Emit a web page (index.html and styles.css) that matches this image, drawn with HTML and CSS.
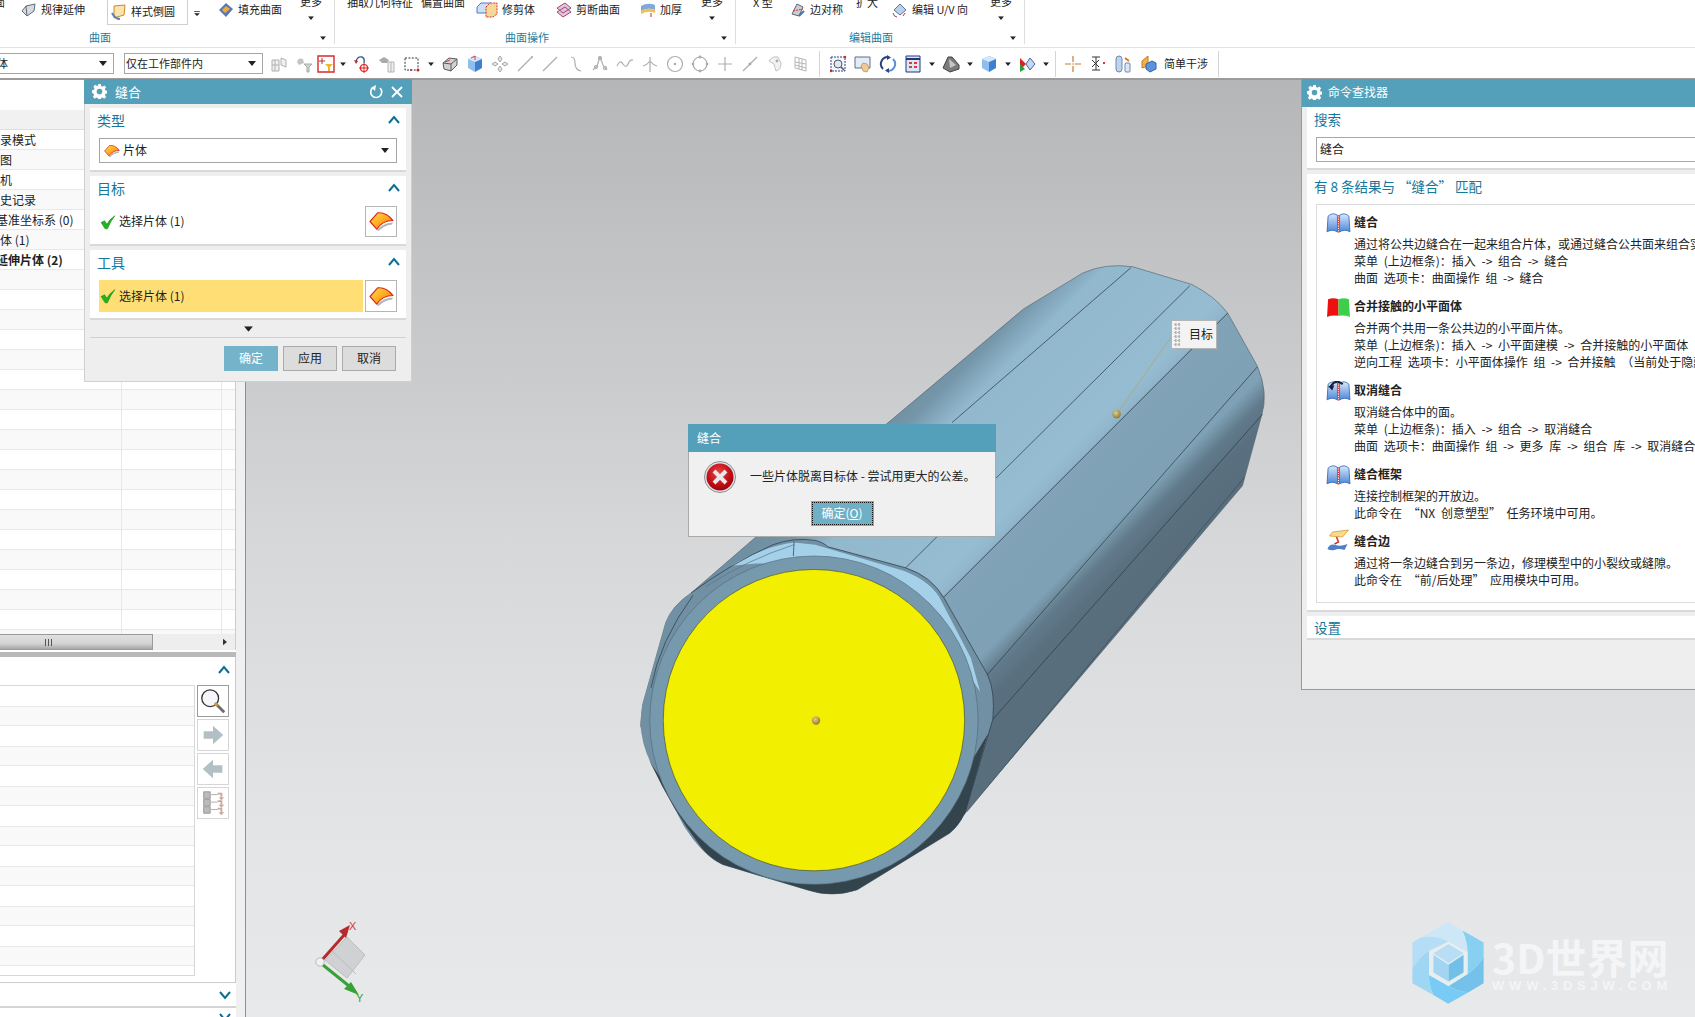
FILE: index.html
```html
<!DOCTYPE html>
<html lang="zh-CN">
<head>
<meta charset="utf-8">
<title>缝合</title>
<link rel="stylesheet" href="styles.css">
</head>
<body>
<svg class="defs" width="0" height="0" aria-hidden="true">
  <defs>
    <linearGradient id="sheetG" x1="0" y1="0" x2="1" y2="1"><stop offset="0" stop-color="#ffe14a"/><stop offset=".55" stop-color="#ffa51e"/><stop offset="1" stop-color="#f07010"/></linearGradient>
    <linearGradient id="blueG" x1="0" y1="0" x2="0" y2="1"><stop offset="0" stop-color="#d6e8fb"/><stop offset="1" stop-color="#4e86d6"/></linearGradient>
    <radialGradient id="redG" cx=".45" cy=".35" r=".75"><stop offset="0" stop-color="#e8444c"/><stop offset=".6" stop-color="#c00d14"/><stop offset="1" stop-color="#8c0006"/></radialGradient>
    <radialGradient id="ballG" cx=".4" cy=".35" r=".7"><stop offset="0" stop-color="#e2cf8c"/><stop offset="1" stop-color="#8a7430"/></radialGradient>
    <linearGradient id="bodyG" gradientUnits="userSpaceOnUse" x1="500" y1="500" x2="1000" y2="1000">
      <stop offset="0" stop-color="#6f8fa2"/><stop offset=".07" stop-color="#7596a9"/><stop offset=".12" stop-color="#83a7bc"/><stop offset=".17" stop-color="#92b8ce"/><stop offset=".52" stop-color="#96bcd2"/><stop offset=".565" stop-color="#90b5cb"/><stop offset=".57" stop-color="#80a3b8"/><stop offset=".8" stop-color="#7fa1b5"/><stop offset=".86" stop-color="#617b8c"/><stop offset=".92" stop-color="#5a7080"/><stop offset="1" stop-color="#586e7d"/>
    </linearGradient>
    <symbol id="gear" viewBox="0 0 16 16"><path fill="#fff" fill-rule="evenodd" d="M6.6 0h2.8l.4 2.2 1.4.6 1.9-1.3 2 2-1.3 1.9.6 1.4 2.1.4v2.8l-2.1.4-.6 1.4 1.3 1.9-2 2-1.9-1.3-1.4.6-.4 2.1H6.6l-.4-2.1-1.4-.6-1.9 1.3-2-2 1.3-1.9-.6-1.4L0 9.4V6.6l2.1-.4.6-1.4-1.3-1.9 2-2 1.9 1.3 1.4-.6zM8 5a3 3 0 1 0 0 6 3 3 0 0 0 0-6z"/></symbol>
    <symbol id="sheet" viewBox="0 0 26 24"><path d="M8 21 Q15 13 25 13 L24 15 Q15 16 10 22z" fill="#b5b5b5"/><path d="M1 12 L9 3 Q18 2 25 11 Q14 11 8 20z" fill="url(#sheetG)" stroke="#d9281c" stroke-width="1.2" stroke-linejoin="round"/></symbol>
    <symbol id="check" viewBox="0 0 14 14"><path d="M1 7.5 L4 6 L6 9 Q8.5 4.5 13 1.5 Q9 6.5 6.5 13 L4.5 13z" fill="#1eb51e" stroke="#0d8a0d" stroke-width=".5"/></symbol>
    <symbol id="chev" viewBox="0 0 12 10"><path d="M1 8 L6 2 L11 8" fill="none" stroke="#0b6f94" stroke-width="2"/></symbol>
    <symbol id="book" viewBox="0 0 24 20"><path d="M1 18 L2 3 Q6 -1 11 2 L11 18 Q6 15 1 18z M23 18 L22 3 Q18 -1 13 2 L13 18 Q18 15 23 18z" fill="url(#blueG)" stroke="#2f68b8" stroke-width=".8"/><path d="M12 2 V19" stroke="#e23b3b" stroke-width="2" stroke-dasharray="1.2 1"/></symbol>
    <symbol id="down" viewBox="0 0 8 5"><path d="M0 0 H8 L4 5z" fill="#222"/></symbol>
    <symbol id="cube" viewBox="0 0 18 18"><path d="M9 1 L16 4 V13 L9 17z" fill="#3f7fd0"/><path d="M9 1 L2 4 V13 L9 17z" fill="#8fbdf0"/><path d="M2 4 L9 1 L16 4 L9 7z" fill="#d5e8fb"/></symbol>
  </defs>
</svg>

<header class="ribbon">
  <section class="rgroup g1">
    <div class="ritems">
      <span class="ri up w21">面</span>
      <span class="ri w86"><svg class="ico16" viewBox="0 0 16 16"><path d="M1 9 L5 4 L14 2 L13 9 L6 14z" fill="#d6dbe2" stroke="#5f6b78"/><path d="M5 4 L6 14" stroke="#5f6b78"/></svg>规律延伸</span>
      <span class="ri boxed w81"><svg class="ico16" viewBox="0 0 16 16"><path d="M3 2 L14 1 L13 11 L3 14z" fill="#fbe3b0" stroke="#c98a2d"/><path d="M1 9 Q4 15 9 15" fill="none" stroke="#4f86c6" stroke-width="2"/></svg>样式倒圆</span>
      <span class="ri ddmark"><svg class="ico8" viewBox="0 0 8 7"><path d="M0 0 H8 V1 H0z M0 3 H8 L4 7z" fill="#222"/></svg></span>
      <span class="ri w82"><svg class="ico16" viewBox="0 0 16 16"><path d="M1 8 L8 1 L15 7 L8 15z" fill="#5a79b4"/><path d="M4 8 L8 4 L12 7 L7 11z" fill="#f2a93b"/></svg>填充曲面</span>
      <span class="more w34"><span class="moretxt">更多</span><svg class="ico6" viewBox="0 0 8 5"><use href="#down"/></svg></span>
    </div>
    <div class="rlabel"><span>曲面</span><svg class="ico6 endarrow" viewBox="0 0 8 5"><use href="#down"/></svg></div>
  </section>
  <section class="rgroup g2">
    <div class="ritems">
      <span class="ri up w74">抽取几何特征</span>
      <span class="ri up w55">偏置曲面</span>
      <span class="ri w81b"><svg class="ico22" viewBox="0 0 22 16"><path d="M1 5 L5 1 H15 V11 H1z" fill="#cfe0f6" stroke="#4d7fc0"/><path d="M10 5 L14 1 H21 V12 L17 15 H10z" fill="#f6d79a" stroke="#d0342c" stroke-dasharray="2 1"/></svg>修剪体</span>
      <span class="ri w84"><svg class="ico16" viewBox="0 0 16 16"><path d="M1 6 L9 1 L15 6 L7 11z M1 10 L9 5 L15 10 L7 15z" fill="#d7c8ea" stroke="#b2445e"/></svg>剪断曲面</span>
      <span class="ri w61"><svg class="ico16" viewBox="0 0 16 16"><path d="M1 4 Q8 0 15 3 V8 Q8 5 1 9z" fill="#7fa8dc"/><path d="M1 9 Q8 5 15 8 V11 Q8 8 1 12z" fill="#f4c04d"/><path d="M11 11 V15" stroke="#c2332a"/></svg>加厚</span>
      <span class="more w34"><span class="moretxt">更多</span><svg class="ico6" viewBox="0 0 8 5"><use href="#down"/></svg></span>
    </div>
    <div class="rlabel"><span>曲面操作</span><svg class="ico6 endarrow" viewBox="0 0 8 5"><use href="#down"/></svg></div>
  </section>
  <section class="rgroup g3">
    <div class="ritems">
      <span class="ri up w37">X 型</span>
      <span class="ri w66"><svg class="ico16" viewBox="0 0 16 16"><path d="M2 12 L7 2 L13 5 L9 14z" fill="#c9cdd4" stroke="#5d6672"/><path d="M3 9 L13 7" stroke="#d33" stroke-dasharray="2 1"/><path d="M9 14 L14 9" stroke="#3a76c4" stroke-width="2"/></svg>边对称</span>
      <span class="ri up w36">扩大</span>
      <span class="ri w98"><svg class="ico16" viewBox="0 0 16 16"><path d="M2 8 L8 2 L14 8 L8 13z" fill="#bcd0ea" stroke="#5876a3"/><path d="M1 11 Q2 15 5 15 M11 14 L13 11" stroke="#c93030" fill="none"/></svg>编辑 U/V 向</span>
      <span class="more w34"><span class="moretxt">更多</span><svg class="ico6" viewBox="0 0 8 5"><use href="#down"/></svg></span>
    </div>
    <div class="rlabel"><span>编辑曲面</span><svg class="ico6 endarrow" viewBox="0 0 8 5"><use href="#down"/></svg></div>
  </section>
</header>

<nav class="toolbar">
  <div class="tselect ts1"><span>体</span><svg class="ico8" viewBox="0 0 8 5"><use href="#down"/></svg></div>
  <div class="tselect ts2"><span>仅在工作部件内</span><svg class="ico8" viewBox="0 0 8 5"><use href="#down"/></svg></div>
  <div class="tools">
    <span class="t"><svg viewBox="0 0 18 18"><path d="M2 5 H9 V16 H2z M11 3 L16 5 V12 L11 10z" fill="#f0f0f0" stroke="#b0b0b0"/><path d="M2 10 H9 M5 5 V16" stroke="#b0b0b0"/></svg></span>
    <span class="t"><svg viewBox="0 0 18 18"><path d="M2 7 Q3 2 8 4 L9 8 L4 10z" fill="#c4c4c4"/><path d="M9 9 H17 L14 12 V17 H12 V12z" fill="#d4d4d4" stroke="#a8a8a8"/></svg></span>
    <span class="t tn"><svg class="redbox" viewBox="0 0 18 18"><path d="M1 1 H17 V17 H1z" fill="#fff" stroke="#d52a2a" stroke-width="1.4"/><path d="M5 3 V9 M2 6 H8" stroke="#b43030"/><path d="M8 9 H16 L13 12 V16 H11 V12z" fill="#f0b62c"/></svg></span>
    <span class="ta"><svg viewBox="0 0 8 5"><use href="#down"/></svg></span>
    <span class="t"><svg viewBox="0 0 18 18"><path d="M3 7 Q4 1 9 2 Q12 3 11 8" fill="none" stroke="#3d5c8a" stroke-width="1.4"/><path d="M1 5 L5 6 L3 9z" fill="#c22"/><circle cx="11" cy="13" r="3.5" fill="none" stroke="#d22" stroke-width="1.2"/><path d="M11 8 V18 M6 13 H16" stroke="#d22"/></svg></span>
    <span class="t"><svg viewBox="0 0 18 18"><path d="M1 5 L6 2 L11 5 L9 8 L4 8z" fill="#aaa"/><path d="M10 7 H16 V17 H10z M13 7 V17" fill="#eee" stroke="#b5b5b5"/></svg></span>
    <span class="t"><svg viewBox="0 0 18 18"><path d="M2 3 H15 V15 H2z" fill="none" stroke="#333" stroke-dasharray="2 1.4"/><circle cx="15" cy="15" r="1.5" fill="#c22"/><circle cx="8" cy="15" r="1" fill="#c22"/></svg></span>
    <span class="ta"><svg viewBox="0 0 8 5"><use href="#down"/></svg></span>
    <span class="t"><svg viewBox="0 0 18 18"><path d="M2 8 L8 3 L16 4 V10 L10 16 L3 14z" fill="#d2d2d4" stroke="#5b5b5b"/><path d="M10 16 V9 L16 4 M10 9 L2 8" stroke="#5b5b5b" fill="none"/><path d="M4 7 L9 5" stroke="#d33"/></svg></span>
    <span class="t"><svg viewBox="0 0 18 18"><use href="#cube"/><path d="M5 3 L9 1 M9 1 V5" stroke="#d33"/></svg></span>
    <span class="t"><svg viewBox="0 0 18 18"><path d="M9 1 L11 4 L9 7 L7 4z M1 9 L4 7 L7 9 L4 11z M17 9 L14 7 L11 9 L14 11z M9 17 L11 14 L9 11 L7 14z" fill="#e8e8e8" stroke="#a5a5a5"/></svg></span>
    <span class="t"><svg viewBox="0 0 18 18"><path d="M2 16 L16 2" class="gs"/><circle cx="16" cy="2" r="1" fill="#aaa"/></svg></span>
    <span class="t"><svg viewBox="0 0 18 18"><path d="M2 16 L16 2" class="gs"/></svg></span>
    <span class="t"><svg viewBox="0 0 18 18"><path d="M5 2 Q9 2 9 8 Q9 15 15 16" class="gs"/></svg></span>
    <span class="t"><svg viewBox="0 0 18 18"><path d="M2 15 L6 11 L9 2 L12 10 L16 15" class="gs"/><circle cx="9" cy="3" r="1.5" class="gs"/><circle cx="5" cy="12" r="1.5" class="gs"/><circle cx="14" cy="13" r="1.5" class="gs"/></svg></span>
    <span class="t"><svg viewBox="0 0 18 18"><path d="M1 11 Q4 4 7 9 T12 9 T17 5" class="gs"/></svg></span>
    <span class="t"><svg viewBox="0 0 18 18"><path d="M9 2 V17 M9 6 Q6 10 2 11 M9 6 Q12 10 16 11" class="gs"/></svg></span>
    <span class="t"><svg viewBox="0 0 18 18"><circle cx="9" cy="9" r="7.5" class="gs"/><circle cx="9" cy="9" r="1.2" fill="#aaa"/></svg></span>
    <span class="t"><svg viewBox="0 0 18 18"><circle cx="9" cy="9" r="7" class="gs"/><circle cx="9" cy="2" r="1.4" fill="#aaa"/><circle cx="9" cy="16" r="1.4" fill="#aaa"/><circle cx="2" cy="9" r="1.4" fill="#aaa"/><circle cx="16" cy="9" r="1.4" fill="#aaa"/></svg></span>
    <span class="t"><svg viewBox="0 0 18 18"><path d="M9 2 V16 M2 9 H16" class="gs"/></svg></span>
    <span class="t"><svg viewBox="0 0 18 18"><path d="M2 16 L16 2" class="gs"/><circle cx="9" cy="9" r="1.4" fill="#aaa"/></svg></span>
    <span class="t"><svg viewBox="0 0 18 18"><path d="M3 6 Q6 1 12 2 L15 8 Q15 15 10 16 L8 9z" fill="#f2f2f2" stroke="#c2c2c2"/><circle cx="11" cy="6" r="1.4" fill="#aaa"/></svg></span>
    <span class="t"><svg viewBox="0 0 18 18"><path d="M4 2 L15 5 V16 L4 13z M4 7 L15 9 M4 10 L15 13 M8 3 V14 M11 4 V15" fill="none" stroke="#b5b5b5"/></svg></span>
    <i class="tsep"></i>
    <span class="t"><svg viewBox="0 0 18 18"><path d="M2 2 H16 V16 H2z" fill="#f4f6fa" stroke="#2a3f98" stroke-dasharray="2 1"/><circle cx="9" cy="9" r="4" fill="#dde8f4" stroke="#556"/><path d="M12 12 L15 15" stroke="#556" stroke-width="1.6"/><circle cx="2" cy="16" r="1.2" fill="#d22"/><circle cx="16" cy="2" r="1.2" fill="#d22"/></svg></span>
    <span class="t"><svg viewBox="0 0 18 18"><path d="M1 2 H16 V13 H1z" fill="#e3ebf5" stroke="#5a6f8e"/><path d="M9 8 L13 9 L15 13 L13 17 L9 16 L7 11z" fill="#f1c998" stroke="#a77a42" stroke-width=".6"/></svg></span>
    <span class="t"><svg viewBox="0 0 18 18"><path d="M4 14 A7 7 0 0 1 9 2" fill="none" stroke="#29417d" stroke-width="2"/><path d="M14 4 A7 7 0 0 1 9 16" fill="none" stroke="#5b8fd8" stroke-width="2"/><path d="M8 0 L12 2.5 L8 5z M10 13 L6 15.500 L10 18z" fill="#29417d"/></svg></span>
    <span class="t"><svg viewBox="0 0 18 18"><path d="M2 1 H16 V17 H2z" fill="#dce6f5" stroke="#22357f"/><path d="M2 4 H16" stroke="#22357f" stroke-width="2"/><path d="M5 7 H8 V9 H5z M10 7 H13 V9 H10z M5 11 H8 V13 H5z M10 11 H13 V13 H10z" fill="#e03a2e"/></svg></span>
    <span class="ta"><svg viewBox="0 0 8 5"><use href="#down"/></svg></span>
    <span class="t"><svg viewBox="0 0 18 18"><path d="M1 13 L6 2 H10 L17 10 V14 L8 17z" fill="#7b7b7b" stroke="#444"/><path d="M7 4 L14 10 L8 13z" fill="#c6c6c6"/></svg></span>
    <span class="ta"><svg viewBox="0 0 8 5"><use href="#down"/></svg></span>
    <span class="t"><svg viewBox="0 0 18 18"><use href="#cube"/></svg></span>
    <span class="ta"><svg viewBox="0 0 8 5"><use href="#down"/></svg></span>
    <span class="t"><svg viewBox="0 0 18 18"><path d="M2 3 L8 9 L2 15z" fill="#d22"/><path d="M2 9 L7 14 L2 17z" fill="#2a9e3a"/><path d="M12 3 L17 9 L12 15 L8 9z" fill="#c8d7f0" stroke="#4163a8"/></svg></span>
    <span class="ta"><svg viewBox="0 0 8 5"><use href="#down"/></svg></span>
    <i class="tsep tsep2"></i>
    <span class="t"><svg viewBox="0 0 18 18"><path d="M9 1 V7 M9 11 V17 M1 9 H7 M11 9 H17" stroke="#c77a36" stroke-width="1.2"/><circle cx="9" cy="9" r=".8" fill="#c77a36"/></svg></span>
    <span class="t"><svg viewBox="0 0 18 18"><path d="M3 2 H11 M3 15 H11 M7 2 V15" stroke="#333"/><path d="M3 5 L10 12 M10 5 L3 12" stroke="#333"/><path d="M14 7 L16 9 M16 7 L14 9" stroke="#d33"/></svg></span>
    <span class="t"><svg viewBox="0 0 18 18"><rect x="2" y="1" width="6" height="16" rx="3" fill="#bcd4ee" stroke="#6e8aa8"/><rect x="11" y="8" width="5" height="9" rx="1" fill="#dbe7f5" stroke="#6e8aa8"/><path d="M11 3 L15 6" stroke="#d07b2c" stroke-width="2"/></svg></span>
    <span class="t"><svg viewBox="0 0 18 18"><path d="M9 1 L3 6 V13 L9 11z" fill="#f1b04e" stroke="#c47a20"/><path d="M7 9 L13 6 L17 8 V14 L11 17 L7 14z" fill="#5c93dc" stroke="#3164a8"/></svg></span>
    <span class="ttext">简单干涉</span>
    <i class="tsep tsep3"></i>
  </div>
</nav>

<main class="workspace">
  <aside class="nav">
    <div class="nav-spacer"></div>
    <div class="nav-head"></div>
    <div class="nav-table">
      <div class="nr">录模式</div>
      <div class="nr">图</div>
      <div class="nr">机</div>
      <div class="nr">史记录</div>
      <div class="nr nclip">基准坐标系 (0)</div>
      <div class="nr">体 (1)</div>
      <div class="nr nb nclip">延伸片体 (2)</div>
    </div>
    <div class="hscroll">
      <div class="thumb"><i></i><i></i><i></i></div>
      <svg class="sarrow" viewBox="0 0 5 8"><path d="M0 0 L5 4 L0 8z" fill="#333"/></svg>
    </div>
    <div class="splitter"></div>
    <section class="nav-sec">
      <div class="nav-sec-head"><svg class="chev" viewBox="0 0 12 10"><use href="#chev"/></svg></div>
      <div class="nav-sec-body">
        <div class="list"></div>
        <div class="side">
          <span class="sbtn sbtn-on"><svg viewBox="0 0 30 30"><circle cx="12" cy="12" r="9" fill="#f4f6fa" stroke="#333" stroke-width="1.4"/><path d="M18 18 L27 27" stroke="#6c6c6c" stroke-width="3"/><path d="M17 17 L20 20" stroke="#d59630" stroke-width="3"/></svg></span>
          <span class="sbtn"><svg viewBox="0 0 30 30"><path d="M5 11 H15 V5 L26 15 L15 25 V19 H5z" fill="#b2c0c6"/></svg></span>
          <span class="sbtn"><svg viewBox="0 0 30 30"><path d="M25 11 H15 V5 L4 15 L15 25 V19 H25z" fill="#b2c0c6"/></svg></span>
          <span class="sbtn"><svg viewBox="0 0 30 30"><path d="M5 3 H12 V10 H5z M5 11 H12 V18 H5z M5 19 H12 V26 H5z" fill="#bbb" stroke="#999"/><path d="M13 6 H20 M13 14 H20 M13 22 H20" stroke="#aaa"/><path d="M20 4 H25 V9 L27 9 L24 12 L21 9 H23 V6 H20z M20 12 H25 V17 L27 17 L24 20 L21 17 H23 V14 H20z M20 20 H25 V25 L27 25 L24 28 L21 25 H23 V22 H20z" fill="#c9a9a0"/></svg></span>
        </div>
      </div>
    </section>
    <div class="nav-fold"><svg class="chev flip" viewBox="0 0 12 10"><use href="#chev"/></svg></div>
    <div class="nav-fold2"><svg class="chev flip" viewBox="0 0 12 10"><use href="#chev"/></svg></div>
  </aside>
  <div class="strip"></div>
  <div class="viewport"></div>
</main>

<svg class="scene" viewBox="0 0 1568 1568">
  <path d="M25 1130 L30 1080 L85 885 Q100 845 145 815 L610 413 L935 140 L1075 55 Q1130 30 1195 40 L1335 82 Q1390 110 1420 150 L1490 275 Q1518 340 1500 395 L1455 560 L790 1345 L760 1385 L540 1520 Q480 1540 420 1520 L220 1460 Q175 1440 130 1370 L50 1220z" fill="url(#bodyG)" stroke="#50626f" stroke-width="1.5"/>
  <path d="M145 815 Q240 745 340 700 Q390 682 440 690 Q460 695 470 705 L655 755 Q715 775 745 825 L850 1010 Q868 1050 862 1115 L795 1340 Q780 1370 760 1385 L540 1520 Q480 1540 420 1520 L220 1460 Q175 1440 130 1370 L50 1220 Q15 1150 30 1080 L85 885 Q100 845 145 815z" fill="#7190a3"/>
  <path d="M50 1220 Q100 1330 170 1420 Q190 1445 220 1460 L420 1520 Q480 1540 540 1520 L760 1385 Q780 1370 795 1340 L850 1150 L700 1400 L430 1500 L150 1370z" fill="#33444d"/>
  <path d="M240 750 Q330 700 390 695 L440 700 L650 762 Q710 785 735 825 L810 970 L832 1050 L700 850 L500 740 L300 745z" fill="#a5d0ea"/>
  <circle cx="437" cy="1117" r="390" fill="#7799ad" stroke="#51697a" stroke-width="1.500"/>
  <circle cx="437" cy="1117" r="358" fill="#f2f000" stroke="#3f4a2a" stroke-width="1.500"/>
  <g fill="none" stroke="#2c3a44" stroke-width="1.7">
    <path d="M765 410 L1190 42"/>
    <path d="M655 755 L1330 85"/>
    <path d="M745 825 L1420 150"/>
    <path d="M848 1010 L1490 278"/>
    <path d="M862 1115 L1503 390"/>
    <path d="M800 1335 L1460 540" stroke="#3d4f5b"/>
    <path d="M145 815 Q240 745 340 700 Q390 682 440 690 Q460 695 470 705 L655 755 Q715 775 745 825 L850 1010 Q868 1050 862 1115 L795 1340"/>
    <path d="M390 692 L388 727 M150 820 Q70 930 50 1040"/>
    <path d="M180 800 Q280 735 390 700" stroke="#5a7486"/>
  </g>
  <path d="M1285 208 L1156 390" stroke="#b3a25a" stroke-width="1.6"/>
  <circle cx="1156" cy="390" r="10" fill="url(#ballG)"/>
  <circle cx="442" cy="1118" r="10" fill="url(#ballG)"/>
</svg>

<div class="tag"><i class="grip"></i><span>目标</span></div>

<svg class="triad" viewBox="0 0 70 90">
  <path d="M38 15 L56 33 L38 56 L16 38z" fill="#d0d1d3" stroke="#bcbdbf"/>
  <path d="M21 27 L47 52" stroke="#bcbdbf"/>
  <path d="M13 38 L36 12" stroke="#b52b2b" stroke-width="3"/><path d="M41 3 L30 9 L37 16z" fill="#b52b2b"/>
  <path d="M14 43 L40 64" stroke="#37a037" stroke-width="3"/><path d="M50 73 L42 60 L35 67z" fill="#37a037"/>
  <circle cx="11" cy="40" r="4.200" fill="#f1f1f1" stroke="#999" stroke-width=".6"/>
  <text x="40" y="8" class="tx">X</text>
  <text x="47" y="80" class="ty">Y</text>
</svg>

<svg class="logo" viewBox="60 40 290 290">
  <path d="M204 67 L247 92 Q265 130 262 175 L205 125 Q165 105 122 113z" fill="#cde7f6"/>
  <path d="M247 92 L310 128 V172 Q290 205 262 222 L262 175 Q265 130 247 92z" fill="#88d0f2"/>
  <path d="M310 172 V250 L265 277 Q235 275 205 258 L262 222 Q290 205 310 172z" fill="#74c1ea"/>
  <path d="M265 277 L204 311 L160 285 Q145 255 147 225 L205 258 Q235 275 265 277z" fill="#78cbf4"/>
  <path d="M160 285 L97 250 V205 Q120 170 147 152 L147 225 Q145 255 160 285z" fill="#9ed6f3"/>
  <path d="M97 205 V128 L122 113 Q165 105 205 125 L147 152 Q120 170 97 205z" fill="#b5def6"/>
  <path d="M205 125 L262 158 V222 L205 258 L147 225 V158z" fill="#e8edf0"/>
  <path d="M205 133 L250 160 L205 190 L160 160z" fill="#b8def5"/>
  <path d="M160 165 L205 195 V245 L160 218z" fill="#a3d5f2"/>
  <path d="M205 195 L250 165 V218 L205 245z" fill="#72c0e8"/>
</svg>
<div class="brand">
  <div class="brand-name">3D世界网</div>
  <div class="brand-url">WWW.3DSJW.COM</div>
</div>

<section class="dlg">
  <div class="titlebar">
    <svg class="gear" viewBox="0 0 16 16"><use href="#gear"/></svg>
    <span class="title">缝合</span>
    <svg class="hbtn" viewBox="0 0 14 14"><path d="M4 2.500 A5.500 5.500 0 1 0 11 3" fill="none" stroke="#fff" stroke-width="1.600"/><path d="M7 0 L2.500 2.500 L6 6z" fill="#fff"/></svg>
    <svg class="hbtn" viewBox="0 0 14 14"><path d="M2 2 L12 12 M12 2 L2 12" stroke="#fff" stroke-width="1.800"/></svg>
  </div>
  <div class="sec s1">
    <div class="sec-head"><span>类型</span><svg class="chev" viewBox="0 0 12 10"><use href="#chev"/></svg></div>
    <div class="select"><svg class="ico16" viewBox="0 0 26 24"><use href="#sheet"/></svg><span>片体</span><svg class="ico8 pushr" viewBox="0 0 8 5"><use href="#down"/></svg></div>
  </div>
  <div class="sec s2">
    <div class="sec-head"><span>目标</span><svg class="chev" viewBox="0 0 12 10"><use href="#chev"/></svg></div>
    <div class="pick">
      <div class="pick-label"><svg class="ico14" viewBox="0 0 14 14"><use href="#check"/></svg><span>选择片体 (1)</span></div>
      <span class="pick-btn"><svg viewBox="0 0 26 24"><use href="#sheet"/></svg></span>
    </div>
  </div>
  <div class="sec s3">
    <div class="sec-head"><span>工具</span><svg class="chev" viewBox="0 0 12 10"><use href="#chev"/></svg></div>
    <div class="pick pick-tall">
      <div class="pick-label active"><svg class="ico14" viewBox="0 0 14 14"><use href="#check"/></svg><span>选择片体 (1)</span></div>
      <span class="pick-btn"><svg viewBox="0 0 26 24"><use href="#sheet"/></svg></span>
    </div>
  </div>
  <div class="more-row"><svg class="ico9" viewBox="0 0 8 5"><use href="#down"/></svg></div>
  <div class="actions">
    <button class="btn primary" type="button">确定</button>
    <button class="btn" type="button">应用</button>
    <button class="btn" type="button">取消</button>
  </div>
</section>

<section class="msg">
  <div class="msg-bar">缝合</div>
  <div class="msg-body">
    <svg class="err" viewBox="0 0 32 32">
      <circle cx="16" cy="16" r="15.500" fill="#dfe2e4" stroke="#8c9094"/>
      <circle cx="16" cy="16" r="13.500" fill="url(#redG)"/>
      <path d="M10 10 L22 22 M22 10 L10 22" stroke="#e9e9e9" stroke-width="4"/>
    </svg>
    <span>一些片体脱离目标体 - 尝试用更大的公差。</span>
  </div>
  <div class="msg-foot"><button class="msg-ok" type="button"><span>确定(<u>O</u>)</span></button></div>
</section>

<section class="finder">
  <div class="finder-bar"><svg class="gear" viewBox="0 0 16 16"><use href="#gear"/></svg><span>命令查找器</span></div>
  <div class="fsec fsearch">
    <div class="fhead">搜索</div>
    <div class="finput">缝合</div>
  </div>
  <div class="fsec fresults">
    <div class="fhead">有 8 条结果与 “缝合” 匹配</div>
    <div class="rbox">
      <article class="res">
        <svg class="res-ico" viewBox="0 0 24 20"><use href="#book"/></svg>
        <div class="res-txt">
          <h3>缝合</h3>
          <p>通过将公共边缝合在一起来组合片体，或通过缝合公共面来组合实体。</p>
          <p>菜单 (上边框条)：插入 -&gt; 组合 -&gt; 缝合</p>
          <p>曲面 选项卡：曲面操作 组 -&gt; 缝合</p>
        </div>
      </article>
      <article class="res">
        <svg class="res-ico" viewBox="0 0 24 20"><path d="M1 19 L2 2 Q7 0 12 2 V18 Q6 17 1 19z" fill="#ee1010"/><path d="M23 19 L22 2 Q17 0 12 2 V18 Q18 17 23 19z" fill="#3ecf4a"/></svg>
        <div class="res-txt">
          <h3>合并接触的小平面体</h3>
          <p>合并两个共用一条公共边的小平面片体。</p>
          <p>菜单 (上边框条)：插入 -&gt; 小平面建模 -&gt; 合并接触的小平面体</p>
          <p>逆向工程 选项卡：小平面体操作 组 -&gt; 合并接触 （当前处于隐藏状态）</p>
        </div>
      </article>
      <article class="res">
        <svg class="res-ico" viewBox="0 0 24 20"><use href="#book"/><path d="M4 6 Q9 -3 16 3" fill="none" stroke="#16233f" stroke-width="2"/><path d="M2 5 L8 4 L6 9z" fill="#16233f"/></svg>
        <div class="res-txt">
          <h3>取消缝合</h3>
          <p>取消缝合体中的面。</p>
          <p>菜单 (上边框条)：插入 -&gt; 组合 -&gt; 取消缝合</p>
          <p>曲面 选项卡：曲面操作 组 -&gt; 更多 库 -&gt; 组合 库 -&gt; 取消缝合</p>
        </div>
      </article>
      <article class="res">
        <svg class="res-ico" viewBox="0 0 24 20"><use href="#book"/></svg>
        <div class="res-txt">
          <h3>缝合框架</h3>
          <p>连接控制框架的开放边。</p>
          <p>此命令在 “NX 创意塑型” 任务环境中可用。</p>
        </div>
      </article>
      <article class="res">
        <svg class="res-ico res-ico-tall" viewBox="0 0 24 24"><path d="M6 4 L22 2 L16 9 L3 8z" fill="#f9d98c" stroke="#d69a32" stroke-width=".8"/><path d="M10 9 L12 14 L8 16" fill="none" stroke="#d0312a" stroke-width="1.5"/><path d="M1 21 Q3 15 9 17 Q14 19 21 16 L18 22 Q12 20 8 22 Q4 23 1 21z" fill="#4e7fcb"/></svg>
        <div class="res-txt">
          <h3>缝合边</h3>
          <p>通过将一条边缝合到另一条边，修理模型中的小裂纹或缝隙。</p>
          <p>此命令在 “前/后处理” 应用模块中可用。</p>
        </div>
      </article>
    </div>
  </div>
  <div class="fsec fsettings"><div class="fhead">设置</div></div>
</section>
</body>
</html>
```

FILE: styles.css
```css
* { box-sizing: border-box; }
html, body { margin: 0; padding: 0; }
body {
  position: relative;
  width: 1695px;
  height: 1017px;
  overflow: hidden;
  background: #fff;
  color: #222;
  font: 12px/1.2 "Noto Sans CJK SC", "Liberation Sans", sans-serif;
  display: flex;
  flex-direction: column;
}
.defs { position: absolute; }
svg { display: block; flex: none; }
.ico6 { width: 6px; height: 4px; }
.ico8 { width: 8px; height: 5px; }
.ico9 { width: 9px; height: 6px; }
.ico14 { width: 16px; height: 16px; }
.ico16 { width: 16px; height: 16px; }
.ico22 { width: 22px; height: 16px; }

/* ribbon */
.ribbon { height: 48px; flex: none; display: flex; overflow: hidden; background: #fff; border-bottom: 1px solid #e2e2e2; font-size: 11px; }
.rgroup { display: flex; flex-direction: column; height: 44px; border-right: 1px solid #dedede; }
.g1 { width: 335px; }
.g2 { width: 401px; }
.g3 { width: 289px; }
.ritems { height: 31px; display: flex; align-items: flex-start; }
.ri { display: flex; align-items: center; gap: 4px; height: 20px; white-space: nowrap; flex: none; }
.ri.up { margin-top: -7px; }
.g2 .ri.up:first-child { margin-left: 12px; }
.g3 .ri.up:first-child { margin-left: 17px; }
.w21 { width: 21px; }
.w34 { width: 34px; }
.w36 { width: 36px; }
.w37 { width: 37px; }
.w55 { width: 55px; }
.w61 { width: 61px; }
.w66 { width: 66px; }
.w74 { width: 74px; }
.w81 { width: 81px; }
.w81b { width: 80px; }
.w82 { width: 82px; }
.w84 { width: 84px; }
.w86 { width: 86px; }
.w98 { width: 98px; }
.g1 .ri.up:first-child { margin-left: -6px; margin-right: 6px; width: 21px; }
.boxed { height: 25px; margin-top: 0; padding-left: 3px; border: 1px solid #cfcfcf; border-top: 0; }
.ddmark { width: 30px; justify-content: center; height: 26px; padding-right: 12px; }
.more { display: flex; flex-direction: column; align-items: flex-start; margin-top: -7px; flex: none; gap: 6px; }
.moretxt { height: 17px; line-height: 17px; }
.more svg { margin-left: 8px; }
.rlabel { height: 13px; display: flex; align-items: center; color: #1a7ca0; line-height: 13px; }
.g1 .rlabel { padding: 0 8px 0 89px; }
.g2 .rlabel { padding: 0 8px 0 170px; }
.g3 .rlabel { padding: 0 8px 0 113px; }
.endarrow { margin-left: auto; }

/* toolbar */
.toolbar { height: 32px; flex: none; display: flex; align-items: center; background: #fff; border-bottom: 2px solid #9b9b9b; font-size: 11px; padding-top: 1px; }
.tselect { height: 21px; display: flex; align-items: center; justify-content: space-between; border: 1px solid #a6a6a6; padding: 0 6px 0 1px; background: #fff; flex: none; }
.ts1 { width: 118px; margin-left: -4px; border-left: 0; }
.ts2 { width: 139px; margin-left: 10px; }
.tools { display: flex; align-items: center; height: 100%; margin-left: 3px; }
.t { width: 25px; height: 25px; display: flex; align-items: center; justify-content: center; flex: none; }
.t svg { width: 18px; height: 18px; }
.tn { width: 20px; }
.ta { width: 13px; display: flex; justify-content: center; flex: none; }
.ta svg { width: 6px; height: 4px; }
.gs { fill: none; stroke: #adadad; stroke-width: 1.2; }
.tsep { display: block; width: 1px; height: 26px; background: #d5d5d5; margin: 0 5px 0 7px; flex: none; }
.tsep2 { margin: 0 4px 0 3px; }
.tsep3 { margin: 0 0 0 6px; }
.ttext { margin-left: 4px; white-space: nowrap; width: 48px; flex: none; }

/* workspace */
.workspace { flex: 1; display: flex; min-height: 0; }
.nav { width: 236px; flex: none; display: flex; flex-direction: column; background: #fff; overflow: hidden; }
.nav-spacer { height: 30px; flex: none; }
.nav-head { height: 20px; flex: none; background: #f1f1f1; border-bottom: 1px solid #ddd; border-right: 1px solid #ccc; }
.nav-table {
  height: 504px;
  flex: none;
  border-right: 1px solid #ccc;
  background-color: #fff;
  background-image:
    linear-gradient(#e8e8e8, #e8e8e8),
    linear-gradient(#e8e8e8, #e8e8e8),
    repeating-linear-gradient(to bottom, #fff 0 19px, #e8e8e8 19px 20px, #f9f9f9 20px 39px, #e8e8e8 39px 40px);
  background-size: 1px 100%, 1px 100%, 100% 100%;
  background-position: 121px 0, 221px 0, 0 0;
  background-repeat: no-repeat;
}
.nr { height: 20px; line-height: 20px; white-space: nowrap; overflow: hidden; }
.nclip { text-indent: -4px; }
.nb { font-weight: 700; }
.hscroll { height: 16px; flex: none; background: #eee; display: flex; align-items: center; justify-content: space-between; padding-right: 8px; border-right: 1px solid #ccc; }
.thumb { width: 153px; height: 100%; display: flex; align-items: center; justify-content: flex-end; gap: 2px; padding-right: 100px; background: linear-gradient(#e0e0e0, #d4d4d4 60%, #a8a8a8); border: 1px solid #9a9a9a; border-left: 0; }
.thumb i { width: 1px; height: 7px; background: #555; }
.sarrow { width: 4px; height: 8px; }
.splitter { height: 5px; margin-top: 2px; flex: none; background: #b9b9b9; }
.nav-sec { height: 326px; flex: none; border-right: 1px solid #ccc; border-bottom: 1px solid #ccc; display: flex; flex-direction: column; }
.nav-sec-head { height: 28px; flex: none; display: flex; align-items: center; justify-content: flex-end; padding: 0 5px 2px 0; }
.chev { width: 12px; height: 10px; }
.flip { transform: scaleY(-1); }
.nav-sec-body { display: flex; gap: 2px; }
.list {
  width: 195px;
  height: 291px;
  flex: none;
  border: 1px solid #d8d8d8;
  border-left: 0;
  background-size: 100% 280px;
  background-repeat: no-repeat;
  background-image: repeating-linear-gradient(to bottom, #fff 0 20px, #e8e8e8 20px 21px, #f9f9f9 21px 39px, #e8e8e8 39px 40px);
}
.side { display: flex; flex-direction: column; gap: 2px; }
.sbtn { width: 32px; height: 32px; border: 1px solid #d6d6d6; display: flex; align-items: center; justify-content: center; background: #fff; }
.sbtn-on { border-color: #9c9c9c; }
.sbtn svg { width: 28px; height: 28px; }
.nav-fold { height: 25px; flex: none; display: flex; align-items: center; justify-content: flex-end; padding-right: 5px; border-bottom: 2px solid #d4d4d4; }
.nav-fold2 { height: 9px; flex: none; display: flex; align-items: flex-start; justify-content: flex-end; padding: 4px 5px 0 0; overflow: hidden; }
.strip { width: 10px; flex: none; background: #f0f0f0; border-right: 1px solid #8f8f8f; }
.viewport { flex: 1; background: linear-gradient(to bottom, #b5b6b8 0, #c4c5c7 22%, #d8d9da 52%, #e3e4e6 80%, #e8e9eb 100%); }

/* 3D scene, free canvas */
.scene { position: absolute; left: 630px; top: 250px; width: 660px; height: 660px; }
.tag { position: absolute; left: 1171px; top: 320px; width: 46px; height: 29px; background: #f3f3f3; border: 1px solid #b5b5b5; display: flex; align-items: center; padding-left: 2px; gap: 8px; }
.grip { width: 7px; height: 23px; flex: none; background: radial-gradient(circle at 1.5px 1.5px, #b5b5b5 1.3px, transparent 1.4px) 0 0 / 3.500px 4px; }
.triad { position: absolute; left: 309px; top: 922px; width: 70px; height: 90px; overflow: visible; }
.tx { font: 11px "Liberation Sans", sans-serif; fill: #d03a3a; }
.ty { font: 11px "Liberation Sans", sans-serif; fill: #37a037; }
.logo { position: absolute; left: 1400px; top: 913px; width: 97px; height: 97px; }
.brand { position: absolute; left: 1492px; top: 934px; width: 180px; color: #f4f5f6; }
.brand-name { font: 700 41px/44px "Noto Sans CJK SC", "Liberation Sans", sans-serif; white-space: nowrap; }
.brand-url { font: 700 13px/14px "Liberation Sans", sans-serif; letter-spacing: 4.800px; white-space: nowrap; margin-top: 1px; }

/* feature dialog */
.dlg { position: absolute; left: 84px; top: 79px; width: 328px; height: 303px; background: #eee; border: 1px solid #d0d0d0; border-top: 0; padding: 0 5px; }
.titlebar { height: 25px; margin: 0 -6px; background: #54a0ba; display: flex; align-items: center; padding: 0 8px; color: #fff; }
.gear { width: 15px; height: 15px; }
.title { font-size: 13px; margin-left: 8px; margin-right: auto; }
.hbtn { width: 14px; height: 14px; margin-left: 7px; }
.sec { background: #fff; border-bottom: 2px solid #d9d9d9; padding: 0 9px 0 9px; margin-top: 4px; }
.s1 { height: 64px; }
.s2, .s3 { height: 70px; }
.sec-head { display: flex; align-items: center; justify-content: space-between; font-size: 14px; color: #14779c; height: 24px; margin-left: -2px; }
.s2 .sec-head, .s3 .sec-head { height: 26px; padding-bottom: 2px; }
.sec-head .chev { margin-right: -3px; }
.select { display: flex; align-items: center; gap: 3px; height: 25px; margin-top: 6px; border: 1px solid #a5a5a5; padding: 0 7px 0 4px; }
.pushr { margin-left: auto; }
.pick { display: flex; align-items: stretch; justify-content: space-between; height: 31px; margin-top: 4px; }
.pick-tall { height: 32px; }
.pick-label { flex: 1; display: flex; align-items: center; gap: 3px; padding-left: 1px; margin-right: 2px; }
.pick-label.active { background: #ffdf75; }
.pick-btn { width: 32px; flex: none; border: 1px solid #b5b5b5; display: flex; align-items: center; justify-content: center; background: #fff; }
.pick-btn svg { width: 25px; height: 23px; }
.more-row { height: 18px; display: flex; align-items: center; justify-content: center; border-bottom: 1px solid #d2d2d2; }
.actions { display: flex; justify-content: flex-end; gap: 5px; padding-right: 10px; margin-top: 8px; }
.btn { width: 54px; height: 25px; font: inherit; color: #222; background: #dcdcdc; border: 1px solid #aaa; padding: 0; }
.btn.primary { background: #74b3c9; border-color: #74b3c9; color: #fff; }

/* message box */
.msg { position: absolute; left: 688px; top: 424px; width: 308px; height: 113px; background: #f0f0f0; border: 1px solid #aaa; border-top: 0; }
.msg-bar { height: 28px; margin: 0 -1px; background: #54a0ba; color: #fff; display: flex; align-items: center; padding-left: 9px; }
.msg-body { display: flex; align-items: center; height: 49px; padding-left: 15px; gap: 14px; white-space: nowrap; color: #222; }
.err { width: 32px; height: 32px; }
.msg-foot { display: flex; justify-content: center; }
.msg-ok { width: 63px; height: 25px; padding: 2px; font: inherit; color: #fff; background: #6fb0c6; border: 0; }
.msg-ok span { display: flex; align-items: center; justify-content: center; height: 100%; outline: 1px dotted #111; }

/* command finder */
.finder { position: absolute; left: 1301px; top: 79px; width: 394px; height: 611px; background: #eee; border-left: 1px solid #9a9a9a; border-bottom: 1px solid #9a9a9a; padding-left: 5px; overflow: hidden; }
.finder-bar { height: 28px; margin-left: -5px; background: #54a0ba; color: #fff; display: flex; align-items: center; gap: 6px; padding: 0 0 1px 5px; white-space: nowrap; }
.fsec { background: #fff; border-bottom: 2px solid #d9d9d9; padding-left: 7px; }
.fhead { font-size: 13.500px; color: #14779c; height: 25px; line-height: 25px; white-space: nowrap; }
.fsearch { height: 63px; }
.finput { height: 25px; line-height: 21px; margin: 5px 0 0 2px; padding-left: 3px; border: 1px solid #a8a8a8; border-right: 0; }
.fresults { height: 438px; margin-top: 4px; }
.rbox { height: 399px; margin: 5px 0 0 2px; border: 1px solid #dcdcdc; border-right: 0; padding-top: 6px; white-space: nowrap; overflow: hidden; }
.res { display: flex; gap: 3px; padding-left: 9px; margin-bottom: 9px; }
.res-ico { width: 25px; height: 21px; margin-top: 2px; }
.res-ico-tall { height: 24px; margin-top: -2px; }
.res-txt h3 { margin: 0; font-size: 12px; font-weight: 700; height: 24px; line-height: 21px; }
.res-txt p { margin: 0; height: 17px; line-height: 17px; word-spacing: 3px; }
.fsettings { height: 24px; margin-top: 4px; }
.fsettings .fhead { height: 22px; line-height: 22px; }
```
